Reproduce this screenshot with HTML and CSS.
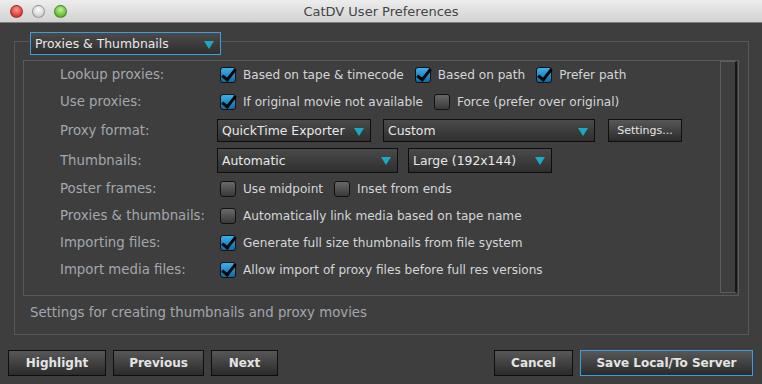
FILE: index.html
```html
<!DOCTYPE html>
<html lang="en">
<head>
    <meta charset="UTF-8">
    <title>CatDV User Preferences</title>
    <link rel="stylesheet" href="styles.css">
</head>
<body>
    <div class="titlebar">
        <div class="lights">
            <span class="light red"></span>
            <span class="light grey"></span>
            <span class="light green"></span>
        </div>
        <div class="title">CatDV User Preferences</div>
        <div></div>
    </div>

    <div class="group">
        <div class="select section">Proxies &amp; Thumbnails</div>
        <div class="panel">
            <div class="rows">
                <div class="row">
                    <div class="label">Lookup proxies:</div>
                    <div class="controls">
                        <span class="check"><span class="cb on"></span>Based on tape &amp; timecode</span>
                        <span class="check"><span class="cb on"></span>Based on path</span>
                        <span class="check"><span class="cb on"></span>Prefer path</span>
                    </div>
                </div>
                <div class="row">
                    <div class="label">Use proxies:</div>
                    <div class="controls">
                        <span class="check"><span class="cb on"></span>If original movie not available</span>
                        <span class="check"><span class="cb"></span>Force (prefer over original)</span>
                    </div>
                </div>
                <div class="row tall">
                    <div class="label">Proxy format:</div>
                    <div class="controls drops">
                        <div class="select w-exporter">QuickTime Exporter</div>
                        <div class="select w-custom">Custom</div>
                        <div class="btn small">Settings...</div>
                    </div>
                </div>
                <div class="row tall">
                    <div class="label">Thumbnails:</div>
                    <div class="controls drops">
                        <div class="select w-auto">Automatic</div>
                        <div class="select w-large">Large (192x144)</div>
                    </div>
                </div>
                <div class="row">
                    <div class="label">Poster frames:</div>
                    <div class="controls">
                        <span class="check"><span class="cb"></span>Use midpoint</span>
                        <span class="check"><span class="cb"></span>Inset from ends</span>
                    </div>
                </div>
                <div class="row">
                    <div class="label">Proxies &amp; thumbnails:</div>
                    <div class="controls">
                        <span class="check"><span class="cb"></span>Automatically link media based on tape name</span>
                    </div>
                </div>
                <div class="row">
                    <div class="label">Importing files:</div>
                    <div class="controls">
                        <span class="check"><span class="cb on"></span>Generate full size thumbnails from file system</span>
                    </div>
                </div>
                <div class="row">
                    <div class="label">Import media files:</div>
                    <div class="controls">
                        <span class="check"><span class="cb on"></span>Allow import of proxy files before full res versions</span>
                    </div>
                </div>
            </div>
            <div class="scrollbar"><div class="thumb"></div></div>
        </div>
        <div class="desc">Settings for creating thumbnails and proxy movies</div>
    </div>

    <div class="buttons">
        <div class="btn w-highlight">Highlight</div>
        <div class="btn w-previous">Previous</div>
        <div class="btn w-next">Next</div>
        <div class="spacer"></div>
        <div class="btn w-cancel">Cancel</div>
        <div class="btn default w-save">Save Local/To Server</div>
    </div>
</body>
</html>
```

FILE: styles.css
```css
body {
    margin: 0;
    width: 762px;
    height: 384px;
    overflow: hidden;
    background: #3e3e3e;
    font-family: "DejaVu Sans", "Liberation Sans", sans-serif;
    font-size: 12.4px;
    color: #d4d6d9;
}

/* window title bar */
.titlebar {
    height: 22px;
    display: grid;
    grid-template-columns: 1fr auto 1fr;
    align-items: center;
    background: linear-gradient(#ededed, #d2d2d2);
    border-bottom: 1px solid #7d7d7d;
}
.lights {
    display: flex;
    gap: 9px;
    padding-left: 10px;
}
.light {
    width: 11px;
    height: 11px;
    border-radius: 50%;
    border: 1px solid rgba(0, 0, 0, 0.3);
}
.light.red {
    background: radial-gradient(circle at 50% 35%, #ff9a90, #e0443a 60%, #b8261e);
}
.light.grey {
    background: radial-gradient(circle at 50% 35%, #ffffff, #d8d8d8 60%, #b0b0b0);
}
.light.green {
    background: radial-gradient(circle at 50% 35%, #c6f19b, #6cc43d 60%, #3f9422);
}
.title {
    font-size: 13px;
    color: #454545;
}

/* preferences group */
.group {
    margin: 18px 13px 0 14px;
    border: 1px solid #585858;
    padding: 0 9px 0 8px;
}
.section {
    width: 191px;
    margin: -10px 0 0 7px;
    border-color: #3c9fdc !important;
}
.panel {
    margin-top: 5px;
    height: 236px;
    box-sizing: border-box;
    border: 1px solid #5a5a5a;
    display: flex;
}
.rows {
    flex: 1;
    padding-left: 36px;
}
.row {
    height: 27px;
    display: flex;
    align-items: center;
}
.row.tall {
    height: 30px;
}
.label {
    width: 157px;
    flex: none;
    font-size: 13.3px;
    color: #a3a7ad;
}
.controls {
    display: flex;
    align-items: center;
    padding-left: 3px;
    gap: 11px;
}
.controls.drops {
    padding-left: 0;
    gap: 12px;
}
.check {
    display: flex;
    align-items: center;
    gap: 7px;
    font-size: 12.1px;
    white-space: nowrap;
}
.cb {
    position: relative;
    width: 14px;
    height: 14px;
    border: 1px solid #111;
    border-radius: 3px;
    background: linear-gradient(#686868, #393939);
}
.cb.on {
    background: linear-gradient(#3cb0ea, #0d6aa6);
}
.cb.on::after {
    content: "";
    position: absolute;
    left: 4px;
    top: -2px;
    width: 5px;
    height: 12px;
    border-right: 3px solid #050505;
    border-bottom: 3px solid #050505;
    transform: rotate(38deg);
}

/* popup menus and buttons */
.select {
    position: relative;
    height: 23px;
    box-sizing: border-box;
    border: 1px solid #0e0e0e;
    background: linear-gradient(#4a4a4a, #2f2f2f);
    color: #e8e8e8;
    padding-left: 4px;
    display: flex;
    align-items: center;
    white-space: nowrap;
}
.select::after {
    content: "";
    position: absolute;
    right: 6px;
    top: 8px;
    border-left: 5px solid transparent;
    border-right: 5px solid transparent;
    border-top: 8px solid #1aa9c6;
}
.w-exporter { width: 154px; }
.w-custom { width: 212px; }
.w-auto { width: 181px; height: 25px; margin-right: -2px; }
.w-large { width: 144px; height: 25px; }

.btn {
    height: 26px;
    box-sizing: border-box;
    border: 1px solid #0e0e0e;
    background: linear-gradient(#575757, #2b2b2b);
    color: #e4e4e4;
    font-weight: bold;
    font-size: 12px;
    display: flex;
    align-items: center;
    justify-content: center;
    white-space: nowrap;
}
.btn.small {
    width: 74px;
    height: 23px;
    font-weight: normal;
    font-size: 11px;
    margin-left: 1px;
}
.btn.default {
    border-color: #3c9fdc;
}

.scrollbar {
    width: 17px;
    padding: 0 1px 2px 0;
}
.thumb {
    height: 100%;
    box-sizing: border-box;
    border: 1px solid #5c5c5c;
    border-right: 2px solid #161616;
}

.desc {
    height: 38px;
    box-sizing: border-box;
    padding: 0 0 5px 7px;
    display: flex;
    align-items: center;
    font-size: 13.3px;
    color: #a3a7ad;
}

/* bottom button bar */
.buttons {
    display: flex;
    gap: 7px;
    margin-top: 15px;
    padding: 0 9px 0 8px;
}
.spacer { flex: 1; }
.w-highlight { width: 98px; }
.w-previous { width: 91px; }
.w-next { width: 67px; }
.w-cancel { width: 79px; }
.w-save { width: 173px; }
```
